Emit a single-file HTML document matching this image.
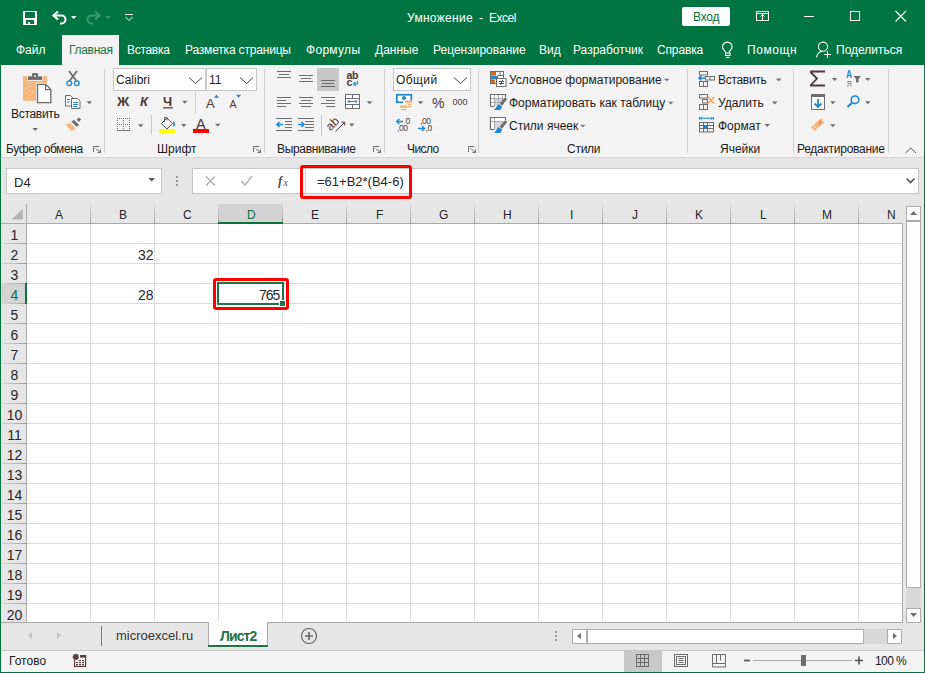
<!DOCTYPE html>
<html><head><meta charset="utf-8">
<style>
*{margin:0;padding:0;box-sizing:border-box}
html,body{width:925px;height:673px;overflow:hidden;background:#f3f3f3;font-family:"Liberation Sans",sans-serif;color:#1b1b1b}
.a{position:absolute}
.t{position:absolute;white-space:nowrap;font-size:12px;line-height:12px}
.w{color:#fff}
svg{position:absolute;left:0;top:0;overflow:visible}
.dd{position:absolute;width:0;height:0;border-left:3px solid transparent;border-right:3px solid transparent;border-top:3px solid #6d6d6d}
</style></head><body>
<!-- green top -->
<div class="a" style="left:0;top:0;width:925px;height:65px;background:#017541"></div>
<div class="a" style="left:0;top:0;width:1px;height:673px;background:#017541"></div>
<div class="a" style="left:924px;top:0;width:1px;height:673px;background:#017541"></div>
<div class="a" style="left:0;top:672px;width:925px;height:1px;background:#017541"></div>

<!-- title -->
<div class="t w" style="left:407px;top:12px;letter-spacing:0.3px">Умножение</div><div class="t w" style="left:479px;top:12px">-</div><div class="t w" style="left:489px;top:12px;letter-spacing:-0.5px">Excel</div>
<div class="a" style="left:682px;top:7px;width:48px;height:19px;background:#fff;border-radius:2px"></div>
<div class="t" style="left:693px;top:11px;color:#0e6b3a;letter-spacing:-0.2px">Вход</div>

<!-- tabs -->
<div class="a" style="left:62px;top:35px;width:57px;height:30px;background:#f3f3f3"></div>
<div class="t w" style="left:16px;top:44px">Файл</div>
<div class="t" style="left:69px;top:44px;color:#127542;letter-spacing:-0.3px">Главная</div>
<div class="t w" style="left:127px;top:44px;letter-spacing:-0.3px">Вставка</div>
<div class="t w" style="left:185px;top:44px;letter-spacing:-0.18px">Разметка страницы</div>
<div class="t w" style="left:306px;top:44px;letter-spacing:0.3px">Формулы</div>
<div class="t w" style="left:375px;top:44px">Данные</div>
<div class="t w" style="left:433px;top:44px">Рецензирование</div>
<div class="t w" style="left:539px;top:44px">Вид</div>
<div class="t w" style="left:573px;top:44px">Разработчик</div>
<div class="t w" style="left:657px;top:44px;letter-spacing:-0.15px">Справка</div>
<div class="t w" style="left:747px;top:44px;letter-spacing:0.6px">Помощн</div>
<div class="t w" style="left:836px;top:44px">Поделиться</div>

<!-- ribbon bottom line + formula area -->
<div class="a" style="left:1px;top:157px;width:923px;height:1px;background:#d6d6d6"></div>
<div class="a" style="left:1px;top:158px;width:923px;height:465px;background:#e6e6e6"></div>

<!-- ===== SVG ICONS (title, tabs, ribbon) ===== -->
<svg width="925" height="673" viewBox="0 0 925 673">
 <!-- save -->
 <g fill="#fff">
  <path d="M23 11h14v14H23z M25 12v6l1.5 0 0 0h7l1.5 0V12z M26 20v4h2v-2h2v2h4v-4z" fill-rule="evenodd"/>
 </g>
 <!-- undo -->
 <g fill="none" stroke="#fff" stroke-width="2">
  <path d="M53 15.5h8.5a4 4 0 0 1 0 8h-1.5"/>
  <path d="M58 11.5l-4.5 4 4.5 4" stroke-width="2.2"/>
 </g>
 <path d="M71 16h5.5l-2.75 3z" fill="#fff"/>
 <!-- redo -->
 <g fill="none" stroke="#3a9b73" stroke-width="2">
  <path d="M100 15.5h-8.5a4 4 0 0 0 0 8h1.5"/>
  <path d="M95 11.5l4.5 4-4.5 4" stroke-width="2.2"/>
 </g>
 <path d="M105.5 16h5.5l-2.75 3z" fill="#3a9b73"/>
 <!-- customize -->
 <path d="M125 14.5h8 M125.5 17l3.5 3.5 3.5-3.5" stroke="#fff" stroke-width="1" fill="none"/>
 <!-- ribbon display options -->
 <g fill="none" stroke="#fff" stroke-width="1">
  <rect x="756.5" y="11.5" width="12" height="9"/>
  <path d="M757 13.5h11 M762.5 14v7 M760.5 16.5l2-2 2 2"/>
 </g>
 <!-- min max close -->
 <path d="M804 16.5h10" stroke="#fff" stroke-width="1"/>
 <rect x="850.5" y="11.5" width="9" height="9" fill="none" stroke="#fff" stroke-width="1"/>
 <path d="M895.5 11l10.5 10.5 M906 11l-10.5 10.5" stroke="#fff" stroke-width="1.1"/>
 <!-- lightbulb -->
 <g fill="none" stroke="#fff" stroke-width="1.1">
  <path d="M725.5 52.5c0-2-3-3-3-5.6a4.8 4.8 0 0 1 9.6 0c0 2.6-3 3.6-3 5.6"/>
  <rect x="725.5" y="53" width="4.5" height="2.5"/>
  <path d="M726 57.5h3.5"/>
 </g>
 <!-- person -->
 <g fill="none" stroke="#fff" stroke-width="1.1">
  <circle cx="823" cy="46.7" r="4.6"/>
  <path d="M816.5 57.5c0.5-3 2.5-5.5 5.5-6.2"/>
  <path d="M824 54.5h7 M827.5 51v7"/>
 </g>
</svg>
<!-- ===== RIBBON ===== -->
<!-- group separators -->
<div class="a" style="left:104px;top:69px;width:1px;height:84px;background:#d2d2d2"></div>
<div class="a" style="left:264px;top:69px;width:1px;height:84px;background:#d2d2d2"></div>
<div class="a" style="left:384px;top:69px;width:1px;height:84px;background:#d2d2d2"></div>
<div class="a" style="left:478px;top:69px;width:1px;height:84px;background:#d2d2d2"></div>
<div class="a" style="left:687px;top:69px;width:1px;height:84px;background:#d2d2d2"></div>
<div class="a" style="left:793px;top:69px;width:1px;height:84px;background:#d2d2d2"></div>
<div class="a" style="left:888px;top:69px;width:1px;height:84px;background:#d2d2d2"></div>

<!-- group labels -->
<div class="t" style="left:6px;top:143px;letter-spacing:-0.4px">Буфер обмена</div>
<div class="t" style="left:157px;top:143px">Шрифт</div>
<div class="t" style="left:277px;top:143px;letter-spacing:-0.33px">Выравнивание</div>
<div class="t" style="left:407px;top:143px;letter-spacing:-0.6px">Число</div>
<div class="t" style="left:567px;top:143px;letter-spacing:-0.25px">Стили</div>
<div class="t" style="left:720px;top:143px">Ячейки</div>
<div class="t" style="left:797px;top:143px;letter-spacing:-0.27px">Редактирование</div>

<!-- clipboard texts -->
<div class="t" style="left:11px;top:108px;letter-spacing:-0.3px">Вставить</div>

<!-- font combos -->
<div class="a" style="left:113px;top:68px;width:93px;height:23px;background:#fff;border:1px solid #c6c6c6"></div>
<div class="a" style="left:206px;top:68px;width:51px;height:23px;background:#fff;border:1px solid #c6c6c6"></div>
<div class="t" style="left:116px;top:74px">Calibri</div>
<div class="t" style="left:209px;top:74px">11</div>
<!-- number combo -->
<div class="a" style="left:393px;top:68px;width:78px;height:23px;background:#fff;border:1px solid #c6c6c6"></div>
<div class="t" style="left:396px;top:74px;letter-spacing:0.4px">Общий</div>
<!-- bottom-align selected bg -->
<div class="a" style="left:317px;top:68px;width:22px;height:23px;background:#c8c8c8"></div>

<!-- styles texts -->
<div class="t" style="left:509px;top:74px">Условное форматирование</div>
<div class="t" style="left:509px;top:97px">Форматировать как таблицу</div>
<div class="t" style="left:509px;top:120px">Стили ячеек</div>
<!-- cells texts -->
<div class="t" style="left:718px;top:74px;letter-spacing:-0.3px">Вставить</div>
<div class="t" style="left:718px;top:97px">Удалить</div>
<div class="t" style="left:718px;top:120px">Формат</div>

<svg width="925" height="673" viewBox="0 0 925 673">
 <!-- dropdown triangles -->
 <g fill="#6d6d6d">
  <path d="M32.5 128h5.5l-2.75 3z"/>
  <path d="M86.5 101.3h5.5l-2.75 3z"/>
  <path d="M182 100.8h5.5l-2.75 3z"/>
  <path d="M138 124.2h5.5l-2.75 3z"/>
  <path d="M181 124h5.5l-2.75 3z"/>
  <path d="M215 123.8h5.5l-2.75 3z"/>
  <path d="M366.8 101.3h5.5l-2.75 3z"/>
  <path d="M349 123.6h5.5l-2.75 3z"/>
  <path d="M417.8 101.2h5.5l-2.75 3z"/>
  <path d="M776 78.5h5.5l-2.75 3z"/>
  <path d="M772 101.5h5.5l-2.75 3z"/>
  <path d="M764.5 124h5.5l-2.75 3z"/>
  <path d="M831.8 78h5.5l-2.75 3z"/>
  <path d="M865 78h5.5l-2.75 3z"/>
  <path d="M830 101.2h5.5l-2.75 3z"/>
  <path d="M865 101.2h5.5l-2.75 3z"/>
  <path d="M830 124.3h5.5l-2.75 3z"/>
 </g>
 <g fill="#7a7a7a">
  <path d="M664 78.8h5.5l-2.75 2.8z"/>
  <path d="M668 101.8h5.5l-2.75 2.8z"/>
  <path d="M580 124.8h5.5l-2.75 2.8z"/>
 </g>
 <!-- launchers -->
 <g fill="none" stroke="#6d6d6d" stroke-width="1">
  <path d="M93.5 152v-5.5h5.5 M95.5 148.5l5 4 M97.5 152.5h3v-3"/>
  <path d="M253.5 152v-5.5h5.5 M255.5 148.5l5 4 M257.5 152.5h3v-3"/>
  <path d="M373.5 152v-5.5h5.5 M375.5 148.5l5 4 M377.5 152.5h3v-3"/>
  <path d="M468.5 152v-5.5h5.5 M470.5 148.5l5 4 M472.5 152.5h3v-3"/>
 </g>
 <!-- collapse ribbon -->
 <path d="M905.5 153l5.25-5 5.25 5" fill="none" stroke="#555" stroke-width="1"/>

 <!-- paste icon -->
 <path d="M23 76h4.2v4.8h15.6V76H47v24.7H23z" fill="#f5b67b"/>
 <rect x="28" y="76.3" width="14" height="3.6" fill="#6b6b6b"/>
 <rect x="32" y="73" width="6" height="4" rx="1.2" fill="#6b6b6b"/>
 <circle cx="35" cy="76" r="1" fill="#f3f3f3"/>
 <g fill="#e8e8e8"><circle cx="27" cy="84.5" r=".6"/><circle cx="30" cy="86.5" r=".6"/><circle cx="26.5" cy="88.5" r=".6"/><circle cx="29.5" cy="90.5" r=".6"/><circle cx="32.5" cy="91.5" r=".6"/><circle cx="27" cy="93.5" r=".6"/><circle cx="31" cy="95.5" r=".6"/><circle cx="28.5" cy="97.5" r=".6"/></g>
 <path d="M37.5 84.3h8.3l5 5.2v13.1H37.5z" fill="#fff" stroke="#f3f3f3" stroke-width="3"/>
 <path d="M37.5 84.3h8.3l5 5.2v13.1H37.5z" fill="#fff" stroke="#6b6b6b" stroke-width="1.3"/>
 <path d="M45.6 84.5v5.1h5" fill="none" stroke="#6b6b6b" stroke-width="1.2"/>

 <!-- scissors -->
 <path d="M69 71l7.5 10 M77 71l-7.5 10" stroke="#6d6d6d" stroke-width="1.8"/>
 <circle cx="69.3" cy="83.2" r="2.4" fill="#f3f3f3" stroke="#1e88d0" stroke-width="1.3"/>
 <circle cx="76.8" cy="83.2" r="2.4" fill="#f3f3f3" stroke="#1e88d0" stroke-width="1.3"/>
 <!-- copy -->
 <path d="M65.5 95.5h5l2.2 2.2v8.3h-7.2z" fill="#fff" stroke="#6d6d6d" stroke-width="1"/>
 <path d="M71.5 98.5h6l2.5 2.5v7.5h-8.5z" fill="#fff" stroke="#6d6d6d" stroke-width="1"/>
 <path d="M67 99.5h3 M67 102h3 M73 102.5h5 M73 104.5h5 M73 106.5h4" stroke="#1e88d0" stroke-width="1"/>
 <!-- format painter -->
 <path d="M65.9 125l3.6-2.3 5.9 5.6-3.6 3.2z" fill="#f5b67b"/>
 <path d="M71.2 121.6l2.8-1.7 5.2 5-2.6 1.9z" fill="#6d6d6d"/>
 <path d="M76.6 119.6l2.4-2.2 2.2 2.1-2.5 2.5z" fill="#6d6d6d"/>

 <!-- combo chevrons -->
 <g fill="none" stroke="#444" stroke-width="1">
  <path d="M189 77.5l6.5 6 6.5-6"/>
  <path d="M240 77.5l6.5 6 6.5-6"/>
  <path d="M454 77.5l6.5 6 6.5-6"/>
 </g>
 <!-- B I U -->
 <text x="117" y="106" font-family="Liberation Sans" font-weight="bold" font-size="13.5" fill="#4b3838">Ж</text>
 <text x="140" y="106" font-family="Liberation Sans" font-weight="bold" font-style="italic" font-size="13" fill="#4b3838">К</text>
 <text x="163" y="106" font-family="Liberation Sans" font-weight="bold" font-size="13" fill="#4b3838">Ч</text>
 <path d="M163 107.8h10" stroke="#4b3838" stroke-width="1.2"/>
 <path d="M195.5 92v21 M151.5 115v20 M321.5 115v21" stroke="#c8c8c8" stroke-width="1"/>
 <!-- grow / shrink font -->
 <text x="206" y="108" font-family="Liberation Sans" font-size="13" fill="#4b3838">A</text>
 <path d="M213.8 97.8h5.4l-2.7-3z" fill="#1e88d0"/>
 <text x="229.5" y="108" font-family="Liberation Sans" font-size="10.5" fill="#4b3838">A</text>
 <path d="M235.8 94.8h5.4l-2.7 3z" fill="#1e88d0"/>
 <!-- borders icon -->
 <g fill="#6d6d6d">
  <path d="M117 118h1v1h-1z M119 118h1v1h-1z M121 118h1v1h-1z M123 118h1v1h-1z M125 118h1v1h-1z M127 118h1v1h-1z M129 118h1v1h-1z"/>
  <path d="M117 124h1v1h-1z M119 124h1v1h-1z M121 124h1v1h-1z M123 124h1v1h-1z M125 124h1v1h-1z M127 124h1v1h-1z M129 124h1v1h-1z"/>
  <path d="M117 120h1v1h-1z M117 122h1v1h-1z M117 126h1v1h-1z M117 128h1v1h-1z M123 120h1v1h-1z M123 122h1v1h-1z M123 126h1v1h-1z M123 128h1v1h-1z M129 120h1v1h-1z M129 122h1v1h-1z M129 126h1v1h-1z M129 128h1v1h-1z"/>
  <rect x="117" y="130" width="13" height="1"/>
 </g>
 <!-- fill color -->
 <path d="M161.5 123.5l5.5-5.5 5.5 5.5-5.5 5.5z" fill="#fff" stroke="#555" stroke-width="1"/>
 <path d="M164.5 122v-4.5h2.5v3" fill="none" stroke="#555" stroke-width="1"/>
 <path d="M173 120.5c1.5 1.5 2.5 3 2 5l-1.5 1.5z" fill="#1e88d0"/>
 <rect x="159" y="129" width="16" height="4" fill="#ffff00"/>
 <!-- font color -->
 <text x="196" y="129" font-family="Liberation Sans" font-size="14.5" fill="#4b3838">A</text>
 <rect x="193" y="129" width="16" height="4" fill="#ff0000"/>

 <!-- alignment -->
 <g stroke="#6d6d6d" stroke-width="1">
  <path d="M277 71.5h14 M279 74.5h10 M277 77.5h14"/>
  <path d="M299 75.5h14 M301 78.5h10 M299 81.5h14"/>
  <path d="M321 80.5h14 M322 83.5h12 M321 86.5h14"/>
  <path d="M277 97.5h14 M277 100.5h9 M277 103.5h14 M277 106.5h9"/>
  <path d="M299 97.5h14 M301 100.5h10 M299 103.5h14 M301 106.5h10"/>
  <path d="M321 97.5h14 M326 100.5h9 M321 103.5h14 M326 106.5h9"/>
  <path d="M276 118.5h16 M285 121.5h7 M285 124.5h7 M285 127.5h7 M276 130.5h16"/>
  <path d="M298 118.5h16 M305 121.5h9 M305 124.5h9 M305 127.5h9 M298 130.5h16"/>
 </g>
 <path d="M277 124.5h6 M279.5 122l-2.5 2.5 2.5 2.5" stroke="#1e88d0" stroke-width="1.6" fill="none"/>
 <path d="M298 124.5h6 M301.5 122l2.5 2.5-2.5 2.5" stroke="#1e88d0" stroke-width="1.6" fill="none"/>
 <!-- wrap text -->
 <text x="346.5" y="79" font-family="Liberation Sans" font-size="10.5" font-weight="bold" fill="#4b3838" letter-spacing="-0.3">ab</text>
 <text x="346.5" y="86" font-family="Liberation Sans" font-size="10.5" font-weight="bold" fill="#4b3838">c</text>
 <path d="M357.5 81v3h-3.5 M355.5 82l-1.8 2 1.8 2" stroke="#1e88d0" stroke-width="1.2" fill="none"/>
 <!-- merge -->
 <rect x="345.5" y="94.5" width="14" height="14" fill="#fff" stroke="#6d6d6d" stroke-width="1"/>
 <path d="M346 98.5h13 M346 104.5h13 M352.5 95v3 M352.5 105v3" stroke="#6d6d6d" stroke-width="1"/>
 <path d="M348 101.5h9 M349.5 100l-1.5 1.5 1.5 1.5 M355.5 100l1.5 1.5-1.5 1.5" stroke="#1e88d0" stroke-width="1" fill="none"/>
 <!-- orientation -->
 <text x="0" y="0" font-family="Liberation Sans" font-size="12" fill="#4b3838" transform="translate(330.6 131.2) rotate(-45)">ab</text>
 <path d="M335.5 131.5l9-9 M341.5 122.3h3.2v3.2" stroke="#4b3838" stroke-width="1" fill="none"/>

 <!-- number: currency -->
 <rect x="396.8" y="94.8" width="14.5" height="7.5" fill="#fff" stroke="#1e88d0" stroke-width="1.7"/>
 <path d="M396 94h3.5l-3.5 3z M412 94h-3.5l3.5 3z M396 103h3.5l-3.5-3z" fill="#1e88d0"/>
 <circle cx="404" cy="98" r="2.1" fill="#1e88d0"/>
 <rect x="403" y="101" width="10" height="4" fill="#f3f3f3"/>
 <rect x="398" y="104.5" width="8" height="6" fill="#f3f3f3"/>
 <g fill="#f5b67b">
  <path d="M405.5 100.5h6l1 1-1 1.5h-6l-1-1.5z"/>
  <rect x="408" y="104" width="3.5" height="1.2"/><rect x="408" y="106" width="3.5" height="1.2"/>
  <path d="M400.5 105.5h6l1 1-1 1.5h-6l-1-1.5z"/>
  <rect x="401" y="109" width="5" height="1.2"/>
 </g>
 <text x="432" y="108" font-family="Liberation Sans" font-size="14" fill="#4b3838">%</text>
 <text x="452.5" y="105" font-family="Liberation Sans" font-size="9" fill="#4b3838">000</text>
 <!-- inc/dec decimal -->
 <g font-family="Liberation Sans" font-size="8.5" fill="#4b3838">
 <text x="405.5" y="124.3">0</text>
 <text x="397" y="131.3" letter-spacing="-0.4">,00</text>
 <text x="420" y="124.3" letter-spacing="-0.4">,00</text>
 <text x="425.5" y="131.3" letter-spacing="-0.4">,0</text>
 </g>
 <path d="M396.5 121.5h6.5 M399.3 119l-2.6 2.5 2.6 2.5" stroke="#1e88d0" stroke-width="1.4" fill="none"/>
 <path d="M418 128.5h6.5 M422 126l2.6 2.5-2.6 2.5" stroke="#1e88d0" stroke-width="1.4" fill="none"/>

 <!-- styles: conditional formatting -->
 <rect x="490.5" y="71.5" width="13" height="12" fill="#fff" stroke="#6d6d6d" stroke-width="1"/>
 <rect x="491" y="72" width="5" height="3.5" fill="#d2691e"/>
 <rect x="491" y="75.8" width="7" height="3.5" fill="#1e88d0"/>
 <rect x="491" y="79.5" width="4" height="3.5" fill="#d2691e"/>
 <path d="M498 75.5h5.5 M500 72v3.5" stroke="#6d6d6d" stroke-width="1"/>
 <rect x="496.5" y="78.5" width="9.5" height="8" fill="#fff" stroke="#6d6d6d" stroke-width="1"/>
 <path d="M499 81.5h5 M499 83.5h5 M502.5 80l-2 5" stroke="#4b3838" stroke-width=".9"/>
 <!-- format as table -->
 <rect x="490" y="94" width="16" height="13" fill="#fff"/>
 <path d="M490.5 106.5v-12h15v2.5" fill="none" stroke="#6d6d6d" stroke-width="1.2"/>
 <path d="M490.5 106.5h4" stroke="#6d6d6d" stroke-width="1.2"/>
 <rect x="494" y="98" width="9" height="8" fill="#d8d8d8"/>
 <path d="M491 98.5h12 M491 102.5h10 M494.5 95v11 M498.5 95v8 M502.5 95v5" stroke="#a8a8a8" stroke-width="1"/>
 <path d="M500.5 103.5l5.5-6.5 0.5 2 -4.5 6z" fill="#6d6d6d"/>
 <path d="M501 104.5l4.8-6" stroke="#6d6d6d" stroke-width="3"/>
 <path d="M494 110l4.5-6 3.5 2.5 -1.5 3.5z" fill="#1e88d0"/>
 <!-- cell styles -->
 <rect x="490" y="117" width="16" height="13" fill="#fff"/>
 <path d="M490.5 129.5v-12h15v2.5" fill="none" stroke="#6d6d6d" stroke-width="1.2"/>
 <path d="M490.5 129.5h4" stroke="#6d6d6d" stroke-width="1.2"/>
 <rect x="494" y="121" width="9" height="8" fill="#d8d8d8"/>
 <path d="M491 121.5h12 M494.5 118v11" stroke="#a8a8a8" stroke-width="1"/>
 <path d="M500.5 126.5l5.5-6.5 0.5 2 -4.5 6z" fill="#6d6d6d"/>
 <path d="M501 127.5l4.8-6" stroke="#6d6d6d" stroke-width="3"/>
 <path d="M494 133l4.5-6 3.5 2.5 -1.5 3.5z" fill="#1e88d0"/>

 <!-- cells: insert -->
 <g fill="none" stroke="#6d6d6d" stroke-width="1">
  <rect x="699.5" y="71.5" width="8" height="3.5"/>
  <rect x="705.5" y="76.5" width="9" height="3.5"/>
  <rect x="699.5" y="81.5" width="8" height="5"/>
  <path d="M703.5 82v4.5 M710 77v3"/>
  <rect x="699.5" y="94.5" width="8" height="3.5"/>
  <rect x="702.5" y="99.5" width="5" height="3.5"/>
  <rect x="699.5" y="104.5" width="8" height="5"/>
  <path d="M703.5 105v4.5"/>
  <rect x="699.5" y="122.5" width="14" height="9.5"/>
  <path d="M700 125.5h13 M700 128.5h13 M703.5 123v9 M707.5 123v9"/>
 </g>
 <path d="M699 78h6 M701.5 75.5l-2.5 2.5 2.5 2.5" stroke="#1e88d0" stroke-width="1.6" fill="none"/>
 <path d="M708 97l6 6.5 M714 97l-6 6.5" stroke="#f5a55a" stroke-width="1.5"/>
 <path d="M699.5 117v2.5 M713.5 117v2.5 M700 118.3h13 M702 116.8l-1.5 1.5 1.5 1.5 M711 116.8l1.5 1.5-1.5 1.5" stroke="#1e88d0" stroke-width="1" fill="none"/>
 <rect x="704" y="126" width="3.5" height="2.5" fill="#1e88d0"/>

 <!-- editing: sum -->
 <path d="M810 71.5h15 M810.5 72l6.5 6.5-6.5 7 M810 85.5h15" stroke="#4b3838" stroke-width="1.8" fill="none"/>
 <!-- sort -->
 <text x="846" y="78" font-family="Liberation Sans" font-weight="bold" font-size="10" fill="#1e88d0" textLength="6" lengthAdjust="spacingAndGlyphs">A</text>
 <text x="846.8" y="87" font-family="Liberation Sans" font-size="9.5" fill="#6d6d6d" textLength="5" lengthAdjust="spacingAndGlyphs">Я</text>
 <path d="M853.5 76h7.5l-2.5 3v3.5h-2.5v-3.5z" fill="#6d6d6d"/>
 <!-- fill -->
 <rect x="811.5" y="94.5" width="13" height="15" fill="#fff" stroke="#6d6d6d" stroke-width="1"/>
 <rect x="811" y="94" width="14" height="3" fill="#6d6d6d"/>
 <path d="M818 99v8 M814.5 103.5l3.5 3.5 3.5-3.5" stroke="#1e88d0" stroke-width="1.8" fill="none"/>
 <!-- find -->
 <circle cx="855" cy="99.8" r="3.8" fill="none" stroke="#1e88d0" stroke-width="1.6"/>
 <path d="M847.5 107l4.5-4.2" stroke="#1e88d0" stroke-width="2.2"/>
 <!-- clear -->
 <g transform="rotate(-42 817.5 124.5)">
  <rect x="811" y="122" width="13" height="5.5" rx=".5" fill="#f5b67b"/>
  <path d="M814 122v5.5" stroke="#f3f3f3" stroke-width=".8"/>
 </g>
 <circle cx="820.5" cy="121.5" r=".75" fill="#b85c1a"/><circle cx="819.5" cy="123.5" r=".75" fill="#b85c1a"/>
</svg>
<!-- ===== FORMULA BAR ===== -->
<div class="a" style="left:6px;top:168px;width:156px;height:26px;background:#fff;border:1px solid #c6c6c6"></div>
<div class="t" style="left:14px;top:176px;font-size:13px;line-height:13px;color:#262626">D4</div>
<div class="a" style="left:192px;top:168px;width:727px;height:26px;background:#fff;border:1px solid #c6c6c6"></div>
<div class="a" style="left:305px;top:169px;width:1px;height:24px;background:#d4d4d4"></div>
<div class="t" style="left:317px;top:175px;font-size:13px;line-height:13px;color:#262626">=61+B2*(B4-6)</div>
<svg width="925" height="673" viewBox="0 0 925 673">
 <path d="M148.5 178h6.5l-3.25 3.5z" fill="#555"/>
 <g fill="#9a9a9a"><rect x="176" y="176" width="2" height="2"/><rect x="176" y="180" width="2" height="2"/><rect x="176" y="184" width="2" height="2"/></g>
 <path d="M206 176.5l9 9 M215 176.5l-9 9" stroke="#aaa" stroke-width="1.3"/>
 <path d="M241.5 181l3.5 4 7-9" stroke="#bbb" stroke-width="1.8" fill="none"/>
 <text x="278" y="185" font-family="Liberation Serif" font-style="italic" font-weight="bold" font-size="13" fill="#555">f</text>
 <text x="283.5" y="185.5" font-family="Liberation Serif" font-style="italic" font-size="10" fill="#555">x</text>
 <path d="M906.5 178.5l4 4 4-4" stroke="#555" stroke-width="1.6" fill="none"/>
</svg>

<!-- ===== GRID ===== -->
<div class="a" style="left:27px;top:224px;width:875px;height:398px;background-color:#fff;
background-image:linear-gradient(to right,transparent 63px,#dadada 63px,#dadada 64px,transparent 64px),linear-gradient(to bottom,transparent 19px,#dadada 19px,#dadada 20px,transparent 20px);
background-size:64px 100%,100% 20px"></div>
<!-- column header separators -->
<div class="a" style="left:90px;top:204px;width:1px;height:19px;background:linear-gradient(to bottom,#dcdcdc,#9c9c9c)"></div>
<div class="a" style="left:154px;top:204px;width:1px;height:19px;background:linear-gradient(to bottom,#dcdcdc,#9c9c9c)"></div>
<div class="a" style="left:218px;top:204px;width:1px;height:19px;background:linear-gradient(to bottom,#dcdcdc,#9c9c9c)"></div>
<div class="a" style="left:282px;top:204px;width:1px;height:19px;background:linear-gradient(to bottom,#dcdcdc,#9c9c9c)"></div>
<div class="a" style="left:346px;top:204px;width:1px;height:19px;background:linear-gradient(to bottom,#dcdcdc,#9c9c9c)"></div>
<div class="a" style="left:410px;top:204px;width:1px;height:19px;background:linear-gradient(to bottom,#dcdcdc,#9c9c9c)"></div>
<div class="a" style="left:474px;top:204px;width:1px;height:19px;background:linear-gradient(to bottom,#dcdcdc,#9c9c9c)"></div>
<div class="a" style="left:538px;top:204px;width:1px;height:19px;background:linear-gradient(to bottom,#dcdcdc,#9c9c9c)"></div>
<div class="a" style="left:602px;top:204px;width:1px;height:19px;background:linear-gradient(to bottom,#dcdcdc,#9c9c9c)"></div>
<div class="a" style="left:666px;top:204px;width:1px;height:19px;background:linear-gradient(to bottom,#dcdcdc,#9c9c9c)"></div>
<div class="a" style="left:730px;top:204px;width:1px;height:19px;background:linear-gradient(to bottom,#dcdcdc,#9c9c9c)"></div>
<div class="a" style="left:794px;top:204px;width:1px;height:19px;background:linear-gradient(to bottom,#dcdcdc,#9c9c9c)"></div>
<div class="a" style="left:858px;top:204px;width:1px;height:19px;background:linear-gradient(to bottom,#dcdcdc,#9c9c9c)"></div>
<!-- row header separators -->
<div class="a" style="left:1px;top:243px;width:25px;height:1px;background:linear-gradient(to right,#dadada,#9c9c9c)"></div>
<div class="a" style="left:1px;top:263px;width:25px;height:1px;background:linear-gradient(to right,#dadada,#9c9c9c)"></div>
<div class="a" style="left:1px;top:283px;width:25px;height:1px;background:linear-gradient(to right,#dadada,#9c9c9c)"></div>
<div class="a" style="left:1px;top:303px;width:25px;height:1px;background:linear-gradient(to right,#dadada,#9c9c9c)"></div>
<div class="a" style="left:1px;top:323px;width:25px;height:1px;background:linear-gradient(to right,#dadada,#9c9c9c)"></div>
<div class="a" style="left:1px;top:343px;width:25px;height:1px;background:linear-gradient(to right,#dadada,#9c9c9c)"></div>
<div class="a" style="left:1px;top:363px;width:25px;height:1px;background:linear-gradient(to right,#dadada,#9c9c9c)"></div>
<div class="a" style="left:1px;top:383px;width:25px;height:1px;background:linear-gradient(to right,#dadada,#9c9c9c)"></div>
<div class="a" style="left:1px;top:403px;width:25px;height:1px;background:linear-gradient(to right,#dadada,#9c9c9c)"></div>
<div class="a" style="left:1px;top:423px;width:25px;height:1px;background:linear-gradient(to right,#dadada,#9c9c9c)"></div>
<div class="a" style="left:1px;top:443px;width:25px;height:1px;background:linear-gradient(to right,#dadada,#9c9c9c)"></div>
<div class="a" style="left:1px;top:463px;width:25px;height:1px;background:linear-gradient(to right,#dadada,#9c9c9c)"></div>
<div class="a" style="left:1px;top:483px;width:25px;height:1px;background:linear-gradient(to right,#dadada,#9c9c9c)"></div>
<div class="a" style="left:1px;top:503px;width:25px;height:1px;background:linear-gradient(to right,#dadada,#9c9c9c)"></div>
<div class="a" style="left:1px;top:523px;width:25px;height:1px;background:linear-gradient(to right,#dadada,#9c9c9c)"></div>
<div class="a" style="left:1px;top:543px;width:25px;height:1px;background:linear-gradient(to right,#dadada,#9c9c9c)"></div>
<div class="a" style="left:1px;top:563px;width:25px;height:1px;background:linear-gradient(to right,#dadada,#9c9c9c)"></div>
<div class="a" style="left:1px;top:583px;width:25px;height:1px;background:linear-gradient(to right,#dadada,#9c9c9c)"></div>
<div class="a" style="left:1px;top:603px;width:25px;height:1px;background:linear-gradient(to right,#dadada,#9c9c9c)"></div>
<!-- selected headers -->
<div class="a" style="left:219px;top:204px;width:63px;height:19px;background:#d3d3d3"></div>

<div class="a" style="left:1px;top:284px;width:25px;height:19px;background:#d3d3d3"></div>

<!-- borders -->
<div class="a" style="left:1px;top:223px;width:902px;height:1px;background:#ababab"></div>
<div class="a" style="left:26px;top:204px;width:1px;height:419px;background:#ababab"></div>
<div class="a" style="left:902px;top:223px;width:1px;height:400px;background:#ababab"></div>
<div class="a" style="left:1px;top:622px;width:902px;height:1px;background:#ababab"></div>
<div class="a" style="left:218px;top:222px;width:65px;height:2px;background:#107040"></div>
<div class="a" style="left:25px;top:283px;width:2px;height:21px;background:#107040"></div>
<!-- select all triangle -->
<svg width="925" height="673" viewBox="0 0 925 673"><path d="M11.5 219.5h11.3v-11z" fill="#b4b4b4"/></svg>

<!-- column letters -->
<div id="cols">
<div class="t ch" style="left:55px">A</div>
<div class="t ch" style="left:119px">B</div>
<div class="t ch" style="left:183px">C</div>
<div class="t ch" style="left:247px;color:#107040">D</div>
<div class="t ch" style="left:311px">E</div>
<div class="t ch" style="left:376px">F</div>
<div class="t ch" style="left:439px">G</div>
<div class="t ch" style="left:503px">H</div>
<div class="t ch" style="left:570px">I</div>
<div class="t ch" style="left:632px">J</div>
<div class="t ch" style="left:695px">K</div>
<div class="t ch" style="left:760px">L</div>
<div class="t ch" style="left:822px">M</div>
<div class="t ch" style="left:887px">N</div>
</div>
<style>.ch{top:209px;color:#262626}.rh{left:2px;width:25px;text-align:center;font-size:14px;line-height:13px;color:#262626}.cv{font-size:14px;line-height:13px;color:#262626}</style>
<div class="t rh" style="top:229px">1</div>
<div class="t rh" style="top:249px">2</div>
<div class="t rh" style="top:269px">3</div>
<div class="t rh" style="top:289px;color:#107040">4</div>
<div class="t rh" style="top:309px">5</div>
<div class="t rh" style="top:329px">6</div>
<div class="t rh" style="top:349px">7</div>
<div class="t rh" style="top:369px">8</div>
<div class="t rh" style="top:389px">9</div>
<div class="t rh" style="top:409px">10</div>
<div class="t rh" style="top:429px">11</div>
<div class="t rh" style="top:449px">12</div>
<div class="t rh" style="top:469px">13</div>
<div class="t rh" style="top:489px">14</div>
<div class="t rh" style="top:509px">15</div>
<div class="t rh" style="top:529px">16</div>
<div class="t rh" style="top:549px">17</div>
<div class="t rh" style="top:569px">18</div>
<div class="t rh" style="top:589px">19</div>
<div class="t rh" style="top:609px">20</div>
<!-- cells -->
<div class="t cv" style="left:138px;top:249px">32</div>
<div class="t cv" style="left:138px;top:289px">28</div>
<div class="a" style="left:217px;top:282px;width:67px;height:23px;border:2px solid #217346"></div>
<div class="a" style="left:279px;top:300px;width:7px;height:7px;background:#217346;border:1px solid #fff"></div>
<div class="t cv" style="left:259px;top:289px;letter-spacing:-1px">765</div>

<!-- red highlight boxes -->
<div class="a" style="left:213px;top:278px;width:76px;height:32px;border:3px solid #ff0000;border-radius:3px"></div>
<div class="a" style="left:300px;top:165px;width:112px;height:34px;border:3px solid #ff0000;border-radius:3px"></div>

<!-- vertical scrollbar -->
<div class="a" style="left:906px;top:206px;width:15px;height:416px;background:#e6e6e6"></div>
<div class="a" style="left:906px;top:206px;width:15px;height:15px;background:#fff;border:1px solid #ababab"></div>
<div class="a" style="left:906px;top:221px;width:15px;height:367px;background:#fff;border:1px solid #ababab"></div>
<div class="a" style="left:906px;top:588px;width:15px;height:20px;background:#d8d8d8"></div>
<div class="a" style="left:906px;top:608px;width:15px;height:15px;background:#fff;border:1px solid #ababab"></div>
<svg width="925" height="673" viewBox="0 0 925 673">
 <path d="M910 215h7l-3.5-4z" fill="#6d6d6d"/>
 <path d="M910 613h7l-3.5 4z" fill="#6d6d6d"/>
</svg>
<!-- ===== SHEET TABS ===== -->
<div class="a" style="left:1px;top:623px;width:923px;height:27px;background:#e6e6e6"></div>
<svg width="925" height="673" viewBox="0 0 925 673">
 <path d="M32 632v7l-4-3.5z" fill="#c0c0c0"/>
 <path d="M57 632v7l4-3.5z" fill="#c0c0c0"/>
</svg>
<div class="a" style="left:101px;top:626px;width:1px;height:20px;background:#7a7a7a"></div>
<div class="t" style="left:116px;top:629px;font-size:13px;line-height:13px;color:#333">microexcel.ru</div>
<div class="a" style="left:208px;top:622px;width:60px;height:25px;background:#fff;border-left:1px solid #ababab;border-right:1px solid #ababab"></div>
<div class="a" style="left:208px;top:645px;width:60px;height:2px;background:#217346"></div>
<div class="t" style="left:220px;top:629px;font-size:14px;line-height:14px;font-weight:bold;color:#217346;letter-spacing:-0.9px">Лист2</div>
<svg width="925" height="673" viewBox="0 0 925 673">
 <circle cx="309" cy="636" r="7.5" fill="none" stroke="#666" stroke-width="1.2"/>
 <path d="M305 636h8 M309 632v8" stroke="#666" stroke-width="1.6"/>
</svg>
<!-- h scroll -->
<svg width="925" height="673" viewBox="0 0 925 673"><g fill="#9a9a9a"><rect x="555" y="631" width="2" height="2"/><rect x="555" y="635" width="2" height="2"/><rect x="555" y="639" width="2" height="2"/></g></svg>
<div class="a" style="left:572px;top:629px;width:15px;height:15px;background:#fff;border:1px solid #ababab"></div>
<div class="a" style="left:587px;top:629px;width:277px;height:15px;background:#fff;border:1px solid #ababab"></div>
<div class="a" style="left:864px;top:629px;width:24px;height:15px;background:#d8d8d8"></div>
<div class="a" style="left:887px;top:629px;width:15px;height:15px;background:#fff;border:1px solid #ababab"></div>
<svg width="925" height="673" viewBox="0 0 925 673">
 <path d="M581 633v6l-4-3z" fill="#6d6d6d"/>
 <path d="M893 633v6l4-3z" fill="#6d6d6d"/>
</svg>

<!-- ===== STATUS BAR ===== -->
<div class="a" style="left:1px;top:650px;width:923px;height:22px;background:#f3f3f3;border-top:1px solid #c8c8c8"></div>
<div class="t" style="left:9px;top:655px">Готово</div>
<svg width="925" height="673" viewBox="0 0 925 673">
 <rect x="74" y="655" width="12" height="12" fill="#fff"/>
 <rect x="85" y="655" width="1.2" height="12" fill="#5a3a3a"/>
 <rect x="74" y="665.8" width="12" height="1.2" fill="#5a3a3a"/>
 <rect x="74" y="660" width="1.2" height="7" fill="#5a3a3a"/>
 <rect x="80" y="655" width="6" height="2.6" fill="#5a3a3a"/>
 <circle cx="75.8" cy="656.9" r="2.9" fill="#5a3a3a" stroke="#777" stroke-width=".6"/>
 <g fill="#5a3a3a"><rect x="79" y="660" width="2" height="1.2"/><rect x="82" y="660" width="2" height="1.2"/><rect x="76" y="662" width="2" height="1.2"/><rect x="79" y="662" width="2" height="1.2"/><rect x="82" y="662" width="2" height="1.2"/><rect x="76" y="664" width="2" height="1.2"/><rect x="79" y="664" width="2" height="1.2"/><rect x="82" y="664" width="2" height="1.2"/></g>
</svg>
<div class="a" style="left:624px;top:651px;width:38px;height:21px;background:#c8c8c8"></div>
<svg width="925" height="673" viewBox="0 0 925 673">
 <g fill="none" stroke="#6d6d6d" stroke-width="1">
  <rect x="636.5" y="654.5" width="12" height="12"/>
  <path d="M640.5 655v11 M644.5 655v11 M637 658.5h11 M637 662.5h11"/>
  <rect x="674.5" y="654.5" width="13" height="12"/>
  <rect x="676.5" y="656.5" width="9" height="8"/>
  <path d="M678.5 658.5h5 M678.5 660.5h5 M678.5 662.5h5"/>
  <path d="M712.5 667v-12.5h13v12.5z M712.5 663.5h13 M716.5 655v8 M720.5 655v5.5"/>
 </g>
 <path d="M744 660.5h6" stroke="#555" stroke-width="1.8"/>
 <path d="M753 660.5h99" stroke="#aaa" stroke-width="1"/>
 <rect x="801" y="655" width="5" height="11" fill="#6d6d6d"/>
 <path d="M855 660.5h8 M859 656.5v8" stroke="#555" stroke-width="1.6"/>
</svg>
<div class="t" style="left:875px;top:655px;letter-spacing:-0.6px">100 %</div>
</body></html>
